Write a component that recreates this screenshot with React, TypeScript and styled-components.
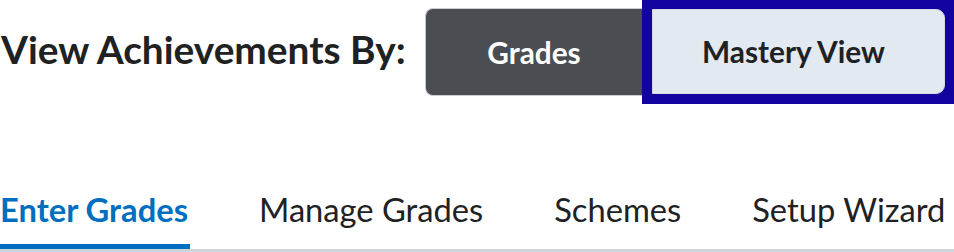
import React from "react";
import styled, { createGlobalStyle } from "styled-components";

const Global = createGlobalStyle`
  html, body { margin: 0; padding: 0; background: #ffffff; }
  body { font-family: Lato, "Noto Sans", sans-serif; color: #202122; }
  #root { width: 954px; height: 252px; overflow: hidden; }
`;

const Page = styled.div`
  width: 954px;
  height: 252px;
  display: flex;
  flex-direction: column;
`;

const ViewRow = styled.div`
  display: flex;
  align-items: flex-start;
  height: 104px;
`;

const Heading = styled.h2`
  margin: 25px 0 0 1px;
  font-size: 38.8px;
  line-height: 48px;
  font-weight: 700;
  color: #202122;
  width: 424px;
  white-space: nowrap;
`;

const Toggle = styled.div`
  display: flex;
  align-items: flex-start;
`;

const ToggleButton = styled.button<{ $active?: boolean }>`
  font-family: Lato, "Noto Sans", sans-serif;
  font-weight: 700;
  font-size: 29.8px;
  cursor: pointer;
  padding: 0;
  ${(p) =>
    p.$active
      ? `
    background: #e3e9f1;
    color: #202122;
    width: 293px;
    height: 85px;
    padding-right: 10px;
    border: 1px solid #d4dae0;
    border-radius: 0 9px 9px 0;
  `
      : `
    margin-top: 8px;
    background: #4a4e52;
    color: #ffffff;
    width: 217px;
    height: 88px;
    border: 1px solid #c9ccd0;
    border-right: none;
    border-radius: 8px 0 0 8px;
  `}
`;

const FocusRing = styled.div`
  background: #12039e;
  padding: 9px 9px 10px 10px;
  display: flex;
`;

const TabRow = styled.div`
  margin-top: auto;
  display: flex;
  gap: 69px;
  border-bottom: 3px solid #cdd5dc;
`;

const Tab = styled.div<{ $active?: boolean }>`
  font-size: 32.7px;
  line-height: 40px;
  font-weight: ${(p) => (p.$active ? 700 : 400)};
  color: ${(p) => (p.$active ? "#006fbf" : "#202122")};
  padding: 0 2px 14px 0;
  border-bottom: 5px solid ${(p) => (p.$active ? "#006fbf" : "transparent")};
  white-space: nowrap;
`;

export default function App() {
  return (
    <>
      <Global />
      <Page>
        <ViewRow>
          <Heading>View Achievements By:</Heading>
          <Toggle>
            <ToggleButton>Grades</ToggleButton>
            <FocusRing>
              <ToggleButton $active>Mastery View</ToggleButton>
            </FocusRing>
          </Toggle>
        </ViewRow>
        <TabRow>
          <Tab $active>Enter Grades</Tab>
          <Tab>Manage Grades</Tab>
          <Tab>Schemes</Tab>
          <Tab>Setup Wizard</Tab>
        </TabRow>
      </Page>
    </>
  );
}
